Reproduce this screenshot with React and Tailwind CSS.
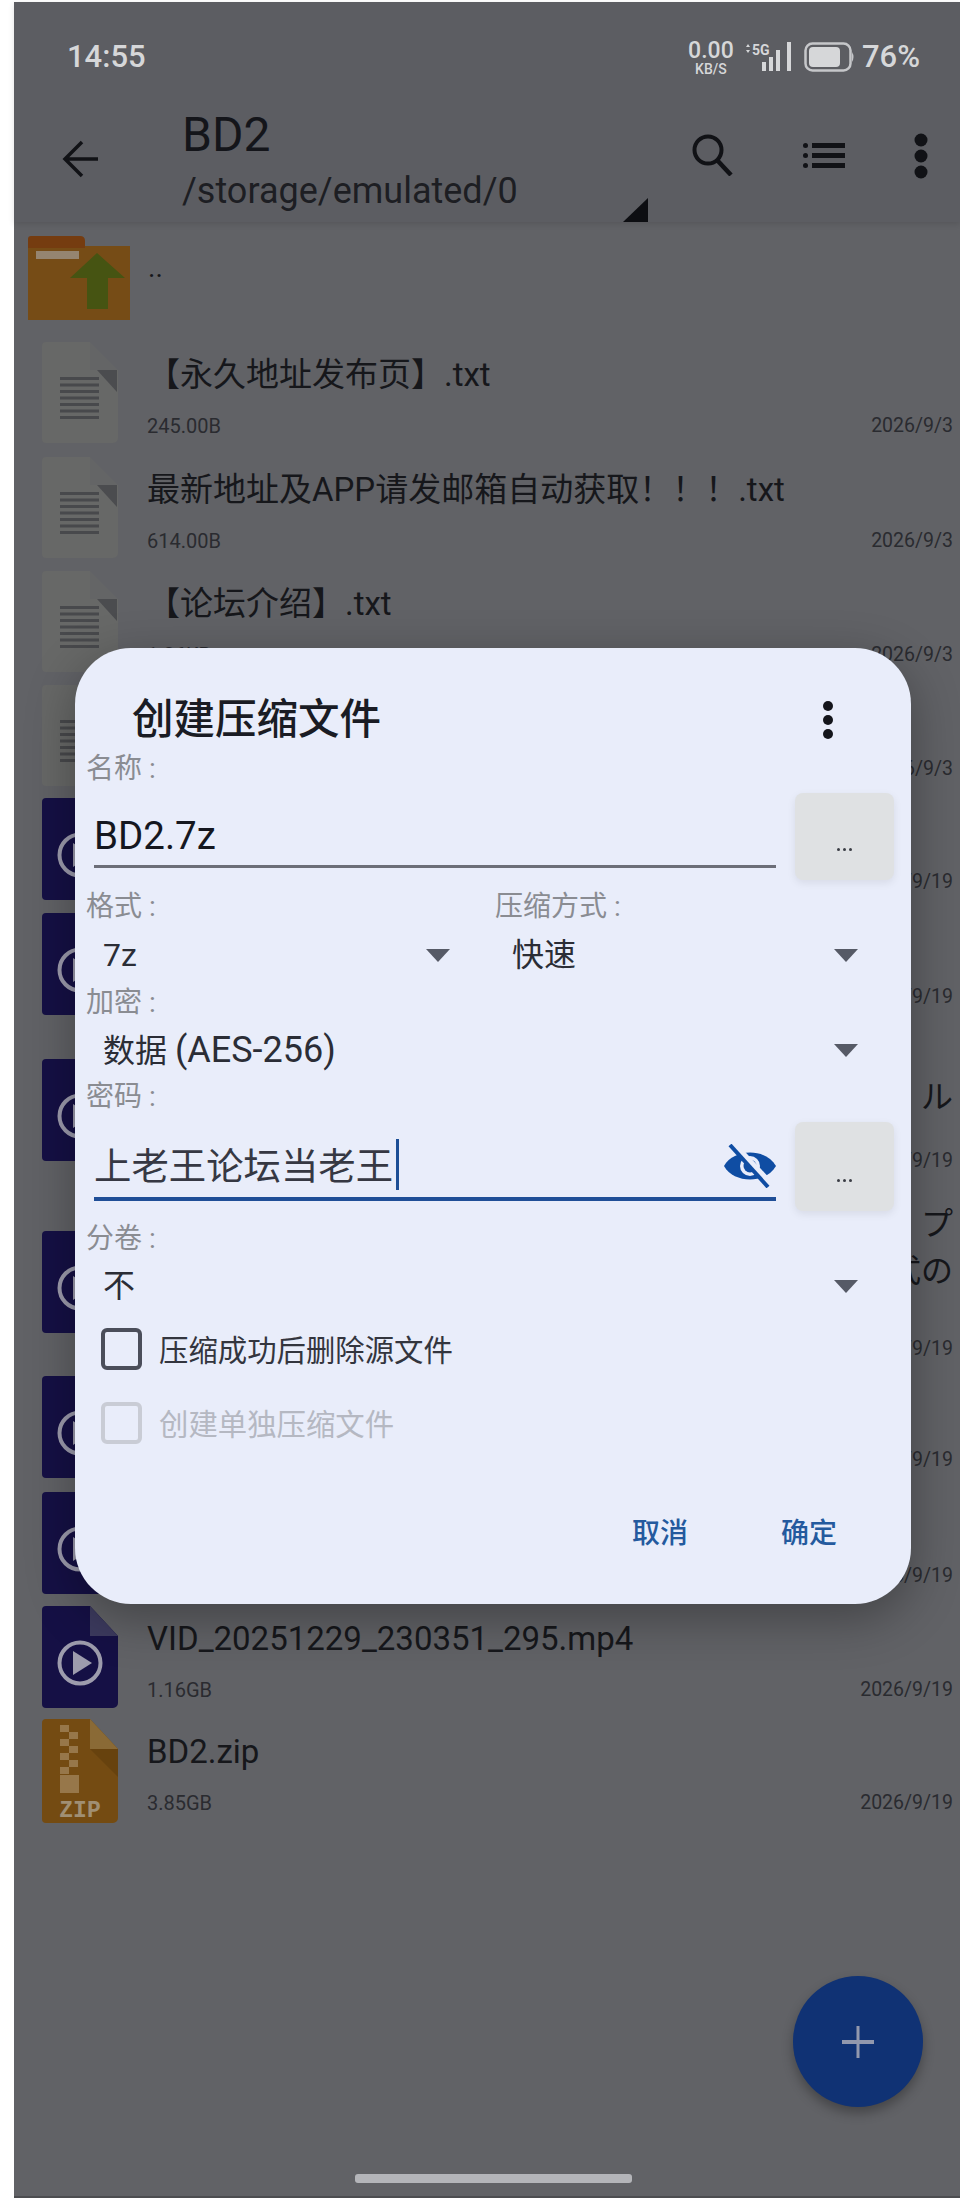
const DocIcon = () => (
  <svg width="76" height="102" viewBox="0 0 76 102" className="shrink-0">
    <path d="M4 0H48V28H76V96a5 5 0 0 1-5 5H4a4 4 0 0 1-4-4V4a4 4 0 0 1 4-4Z" fill="#676867" />
    <path d="M48 0L76 28H48Z" fill="#646566" />
    <path d="M55 28H75V50Z" fill="#4b4c4f" />
    {[35, 41.5, 48, 54.5, 61, 67.5, 74].map((y) => (
      <rect key={y} x="18" y={y} width="39" height="3" fill="#48494c" />
    ))}
  </svg>
);

const VideoIcon = () => (
  <svg width="76" height="102" viewBox="0 0 76 102" className="shrink-0">
    <path d="M4 0H48L76 30V97a5 5 0 0 1-5 5H4a4 4 0 0 1-4-4V4a4 4 0 0 1 4-4Z" fill="#151045" />
    <path d="M48 0L76 30H48Z" fill="#3c3a5e" />
    <circle cx="38" cy="57" r="20.5" fill="none" stroke="#9d9cad" strokeWidth="4" />
    <path d="M31 45L50 57L31 69Z" fill="#9d9cad" />
  </svg>
);

const ZipIcon = () => (
  <svg width="76" height="104" viewBox="0 0 76 104" className="shrink-0">
    <path d="M4 0H48L76 30V99a5 5 0 0 1-5 5H4a4 4 0 0 1-4-4V4a4 4 0 0 1 4-4Z" fill="#744b12" />
    <path d="M48 0L76 30H48Z" fill="#8a6a36" />
    <path d="M48 30H76V58Z" fill="#67420e" />
    {[6, 20, 34, 48].map((y) => (
      <rect key={y} x="18" y={y} width="9" height="7" fill="#97774a" />
    ))}
    {[13, 27, 41].map((y) => (
      <rect key={y} x="27" y={y} width="9" height="7" fill="#97774a" />
    ))}
    <rect x="18" y="56" width="19" height="18" fill="#97774a" />
    <text x="38" y="98" textAnchor="middle" fontSize="23" fontWeight="700" fill="#a08f74" fontFamily="Liberation Mono, monospace">ZIP</text>
  </svg>
);

const FolderIcon = () => (
  <svg width="102" height="84" viewBox="0 0 102 84" className="shrink-0">
    <path d="M3 0H52Q57 0 57 5V12H99Q102 12 102 15V84H0V3Q0 0 3 0Z" fill="#753c10" />
    <path d="M0 12H57V10H102V84H0Z" fill="#764c16" />
    <rect x="8" y="15" width="43" height="8" fill="#958570" />
    <path d="M69 17L97 42H80V73H59V42H42Z" fill="#465412" />
  </svg>
);

const Caret = () => (
  <svg width="24" height="13" viewBox="0 0 24 13" className="shrink-0">
    <path d="M0 0H24L12 13Z" fill="#565a66" />
  </svg>
);

const Row = ({ h, icon, iconMt, children }) => (
  <div className={`flex pl-[28px] pr-[7px] ${h}`}>
    <div className={iconMt}>{icon}</div>
    <div className="flex-1 min-w-0 pl-[29px]">{children}</div>
  </div>
);

const Name = ({ children }) => (
  <div className="mt-[13px] h-[40px] leading-[40px] text-[33px] text-[#16171b] whitespace-nowrap">{children}</div>
);

const Meta = ({ size, date, className }) => (
  <div className={`flex justify-between h-[24px] leading-[24px] text-[20px] text-[#2a2b30] ${className}`}>
    <span>{size}</span>
    <span className="text-[19.5px]">{date}</span>
  </div>
);

const Label = ({ className, children }) => (
  <div className={`h-[32px] leading-[32px] text-[28px] text-[#8a8c92] ${className}`}>{children}</div>
);

const Select = ({ children, className }) => (
  <div className={`flex items-center justify-between h-[44px] pl-[17px] text-[32px] leading-[44px] text-[#2b2d36] ${className}`}>
    <span>{children}</span>
    <Caret />
  </div>
);

const DotsButton = () => (
  <div className="shrink-0 w-[99px] flex items-end justify-center pb-[29px] bg-[#dfe1e3] rounded-[8px] shadow-[0_3px_8px_rgba(0,0,0,0.08)]">
    <div className="flex gap-[3px]">
      <span className="w-[3px] h-[3px] rounded-full bg-[#3b3d45]" />
      <span className="w-[3px] h-[3px] rounded-full bg-[#3b3d45]" />
      <span className="w-[3px] h-[3px] rounded-full bg-[#3b3d45]" />
    </div>
  </div>
);

export default function App() {
  return (
    <div className="relative w-[960px] h-[2201px] overflow-hidden bg-white pl-[14px] pt-[2px] [font-family:Roboto,'Noto_Sans_CJK_SC',sans-serif]">
      <div className="h-[2196px] bg-[#616266] border-b-[2px] border-[#4c4d50]">
        {/* app bar */}
        <header className="h-[220px] bg-[#5c5d62] shadow-[0_2px_6px_rgba(0,0,0,0.12)]">
          <div className="flex items-center justify-between h-[110px] pl-[53px] pr-[40px] text-[#d6d7d9]">
            <span className="text-[31px] font-medium">14:55</span>
            <div className="flex items-center">
              <div className="flex flex-col items-center w-[46px]">
                <span className="text-[23px] leading-[23px] font-medium">0.00</span>
                <span className="text-[14px] leading-[14px] font-medium">KB/S</span>
              </div>
              <svg width="48" height="30" viewBox="0 0 48 30" className="ml-[11px]">
                <path d="M1 5L3 2L5 5ZM1 8L3 11L5 8Z" fill="#d6d7d9" />
                <text x="7" y="13" fontSize="14" fontWeight="700" fill="#d6d7d9" fontFamily="Roboto, sans-serif">5G</text>
                <rect x="17" y="20" width="4" height="9" fill="#d6d7d9" />
                <rect x="24" y="15" width="4" height="14" fill="#d6d7d9" />
                <rect x="31" y="8" width="4" height="21" fill="#d6d7d9" />
                <rect x="42" y="0" width="4" height="29" fill="#d6d7d9" />
              </svg>
              <svg width="52" height="30" viewBox="0 0 52 30" className="ml-[11px]">
                <rect x="1.5" y="1.5" width="45" height="27" rx="7" fill="none" stroke="#c6c7ca" strokeWidth="2.5" />
                <rect x="5" y="5" width="31" height="20" rx="4" fill="#d6d7d9" />
                <path d="M48 10Q51 15 48 20Z" fill="#c6c7ca" />
              </svg>
              <span className="ml-[6px] text-[31px] font-medium">76%</span>
            </div>
          </div>
          <div className="flex h-[110px]">
            <div className="w-[168px] pl-[48px] pt-[28px]">
              <svg width="37" height="38" viewBox="0 0 37 38" fill="none" stroke="#111216" strokeWidth="3.5">
                <path d="M36 19H3M20 2L3 19L20 36" />
              </svg>
            </div>
            <div className="w-[466px] -mt-[3px]">
              <div className="h-[52px] leading-[52px] text-[48px] text-[#14151a]">BD2</div>
              <div className="flex items-end justify-between h-[52px] mt-[2px]">
                <span className="text-[36px] leading-[48px] text-[#1d1e23]">/storage/emulated/0</span>
                <svg width="25" height="24" viewBox="0 0 25 24" className="-mb-[7px]">
                  <path d="M25 0V24H0Z" fill="#0d0e12" />
                </svg>
              </div>
            </div>
            <div className="relative flex-1">
              <svg width="43" height="42" viewBox="0 0 43 42" fill="none" stroke="#111216" strokeWidth="4" className="absolute left-[43px] top-[22px]">
                <circle cx="17" cy="16" r="13.5" />
                <path d="M26 26L40 41" strokeWidth="4.5" />
              </svg>
              <svg width="42" height="27" viewBox="0 0 42 27" fill="#111216" className="absolute left-[155px] top-[30px]">
                <rect x="0" y="1" width="5" height="5" rx="2.5" />
                <rect x="0" y="11" width="5" height="5" rx="2.5" />
                <rect x="0" y="21" width="5" height="5" rx="2.5" />
                <rect x="9" y="1" width="33" height="5" />
                <rect x="9" y="11" width="33" height="5" />
                <rect x="9" y="21" width="33" height="5" />
              </svg>
              <svg width="16" height="46" viewBox="0 0 16 46" fill="#111216" className="absolute left-[265px] top-[21px]">
                <circle cx="8" cy="7" r="6.5" />
                <circle cx="8" cy="23" r="6.5" />
                <circle cx="8" cy="39" r="6.5" />
              </svg>
            </div>
          </div>
        </header>

        {/* file list */}
        <div>
          <div className="flex h-[120px] pl-[14px]">
            <div className="mt-[14px]"><FolderIcon /></div>
            <span className="ml-[18px] mt-[30px] text-[28px] leading-[32px] text-[#16171b]">..</span>
          </div>
          <Row h="h-[114.5px]" icon={<DocIcon />}>
            <Name>【永久地址发布页】.txt</Name>
            <Meta className="mt-[19px]" size="245.00B" date="2026/9/3" />
          </Row>
          <Row h="h-[114px]" icon={<DocIcon />}>
            <Name>最新地址及APP请发邮箱自动获取！！！.txt</Name>
            <Meta className="mt-[19px]" size="614.00B" date="2026/9/3" />
          </Row>
          <Row h="h-[114.5px]" icon={<DocIcon />}>
            <Name>【论坛介绍】.txt</Name>
            <Meta className="mt-[19px]" size="1.36KB" date="2026/9/3" />
          </Row>
          <Row h="h-[113px]" icon={<DocIcon />}>
            <Meta className="mt-[72px]" size="" date="2026/9/3" />
          </Row>
          <Row h="h-[115px]" icon={<VideoIcon />}>
            <Meta className="mt-[72px]" size="" date="2026/9/19" />
          </Row>
          <Row h="h-[114.5px]" icon={<VideoIcon />}>
            <Meta className="mt-[72px]" size="" date="2026/9/19" />
          </Row>
          <Row h="h-[171.5px]" iconMt="mt-[31px]" icon={<VideoIcon />}>
            <div className="pt-[45px] h-[95px] leading-[49px] text-[32px] text-[#16171b] text-right">・ル</div>
            <Meta className="mt-[26px]" size="" date="2026/9/19" />
          </Row>
          <Row h="h-[177px]" iconMt="mt-[32px]" icon={<VideoIcon />}>
            <div className="pt-[2px] h-[98px] leading-[47px] text-[32px] text-[#16171b] text-right">
              <div>・プ</div>
              <div>式の</div>
            </div>
            <Meta className="mt-[40px]" size="" date="2026/9/19" />
          </Row>
          <Row h="h-[116px]" icon={<VideoIcon />}>
            <Meta className="mt-[72px]" size="" date="2026/9/19" />
          </Row>
          <Row h="h-[114px]" icon={<VideoIcon />}>
            <Meta className="mt-[72px]" size="" date="2026/9/19" />
          </Row>
          <Row h="h-[113px]" icon={<VideoIcon />}>
            <Name>VID_20251229_230351_295.mp4</Name>
            <Meta className="mt-[19px]" size="1.16GB" date="2026/9/19" />
          </Row>
          <Row h="h-[114px]" icon={<ZipIcon />}>
            <Name>BD2.zip</Name>
            <Meta className="mt-[19px]" size="3.85GB" date="2026/9/19" />
          </Row>
        </div>
      </div>

      {/* dialog */}
      <div className="absolute left-[75px] top-[648px] w-[836px] h-[956px] rounded-[56px] bg-[#e9edfa] pt-[48px] pl-[11px] pr-[17px] shadow-[0_14px_50px_rgba(0,0,0,0.32)]">
        <div className="relative h-[48px] pl-[46px] leading-[48px] text-[41.5px] font-medium text-[#1a1c24]">
          创建压缩文件
          <svg width="12" height="38" viewBox="0 0 12 38" fill="#14151b" className="absolute left-[736px] top-[5px]">
            <circle cx="6" cy="5" r="5" />
            <circle cx="6" cy="19" r="5" />
            <circle cx="6" cy="33" r="5" />
          </svg>
        </div>

        <Label className="mt-[9px]">名称 :</Label>
        <div className="flex h-[87px] mt-[8px] pl-[8px] gap-[19px]">
          <div className="flex-1 h-[75px] border-b-[3px] border-[#6c6e78] pt-[21px] leading-[44px] text-[38.5px] text-[#15171f]">BD2.7z</div>
          <DotsButton />
        </div>

        <div className="grid grid-cols-[364px_363px] gap-x-[45px] mt-[11px]">
          <div>
            <Label>格式 :</Label>
            <Select className="mt-[10px]">7z</Select>
          </div>
          <div>
            <Label>压缩方式 :</Label>
            <Select className="mt-[10px]">快速</Select>
          </div>
        </div>

        <Label className="mt-[10px]">加密 :</Label>
        <Select className="mt-[9px] w-[772px]">
          数据 <span className="text-[36px]">(AES-256)</span>
        </Select>

        <Label className="mt-[9px]">密码 :</Label>
        <div className="flex h-[89px] mt-[9px] pl-[8px] gap-[19px]">
          <div className="flex-1 flex items-start h-[79px] border-b-[4px] border-[#1f4e97]">
            <span className="mt-[23px] leading-[44px] text-[37.4px] text-[#363843]">上老王论坛当老王</span>
            <span className="w-[3px] h-[51px] mt-[17px] ml-[3px] bg-[#1c4e96]" />
            <svg width="52" height="44" viewBox="0 0 52 44" className="ml-auto mt-[22px]">
              <path d="M0 22C10 4 42 4 52 22C42 40 10 40 0 22Z" fill="#0f4da3" />
              <circle cx="26" cy="22" r="10" fill="#e9edfa" />
              <circle cx="26" cy="22" r="6.5" fill="#0f4da3" />
              <path d="M10 1L47 41" stroke="#e9edfa" strokeWidth="7" />
              <path d="M6 1L44 43" stroke="#0f4da3" strokeWidth="4" />
            </svg>
          </div>
          <DotsButton />
        </div>

        <Label className="mt-[12px]">分卷 :</Label>
        <Select className="mt-[9px] w-[772px]">不</Select>

        <div className="flex items-center h-[42px] mt-[20px] pl-[15px]">
          <span className="w-[41px] h-[42px] rounded-[6px] border-[4px] border-[#4b4e5a]" />
          <span className="ml-[17px] pt-[3px] text-[29.4px] leading-[42px] text-[#33353e]">压缩成功后删除源文件</span>
        </div>
        <div className="flex items-center h-[42px] mt-[32px] pl-[15px]">
          <span className="w-[41px] h-[42px] rounded-[6px] border-[4px] border-[#c9ccd5]" />
          <span className="ml-[17px] pt-[3px] text-[29.4px] leading-[42px] text-[#b5b8c2]">创建单独压缩文件</span>
        </div>

        <div className="flex justify-end gap-[93px] h-[40px] mt-[70px] pr-[57px] leading-[40px] text-[28px] font-medium text-[#245a9e]">
          <span>取消</span>
          <span>确定</span>
        </div>
      </div>

      {/* floating action button */}
      <div className="absolute left-[793px] top-[1976px] flex items-center justify-center w-[130px] h-[131px] rounded-full bg-[#103274] shadow-[0_6px_12px_rgba(0,0,0,0.3)]">
        <svg width="32" height="32" viewBox="0 0 32 32" fill="#9298ad">
          <rect x="14.5" y="0" width="3" height="32" />
          <rect x="0" y="14" width="32" height="4" />
        </svg>
      </div>

      {/* home indicator */}
      <div className="absolute left-[355px] top-[2174px] w-[277px] h-[9px] rounded-[3px] bg-[#b4b5b9]" />
    </div>
  );
}
